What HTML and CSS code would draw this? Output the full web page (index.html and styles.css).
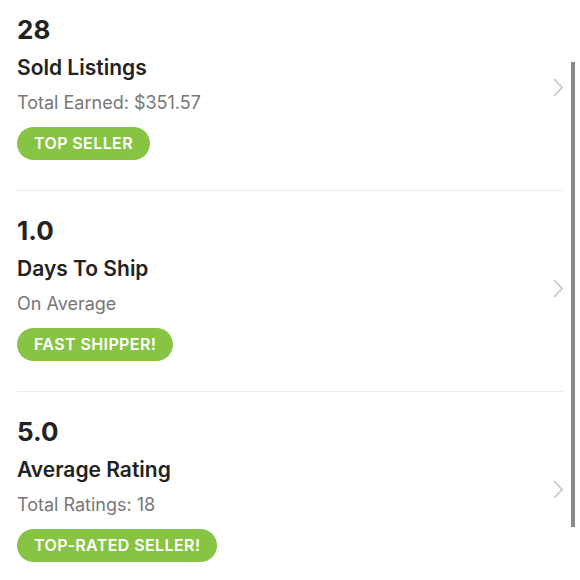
FILE: index.html
```html
<!DOCTYPE html>
<html lang="en">
<head>
  <meta charset="UTF-8">
  <title>Seller Stats</title>
  <link rel="stylesheet" href="styles.css">
</head>
<body>
  <div class="stats">
    <div class="stat-row">
      <div class="info">
        <div class="value">28</div>
        <div class="label">Sold Listings</div>
        <div class="sub">Total Earned: $351.57</div>
        <span class="badge">TOP SELLER</span>
      </div>
      <svg class="chevron" width="10" height="19" viewBox="0 0 10 19"><path d="M1 1l8 8.5-8 8.5" fill="none" stroke="#c9c9c9" stroke-width="1.8"/></svg>
    </div>

    <div class="stat-row">
      <div class="info">
        <div class="value">1.0</div>
        <div class="label">Days To Ship</div>
        <div class="sub">On Average</div>
        <span class="badge">FAST SHIPPER!</span>
      </div>
      <svg class="chevron" width="10" height="19" viewBox="0 0 10 19"><path d="M1 1l8 8.5-8 8.5" fill="none" stroke="#c9c9c9" stroke-width="1.8"/></svg>
    </div>

    <div class="stat-row">
      <div class="info">
        <div class="value">5.0</div>
        <div class="label">Average Rating</div>
        <div class="sub">Total Ratings: 18</div>
        <span class="badge">TOP-RATED SELLER!</span>
      </div>
      <svg class="chevron" width="10" height="19" viewBox="0 0 10 19"><path d="M1 1l8 8.5-8 8.5" fill="none" stroke="#c9c9c9" stroke-width="1.8"/></svg>
    </div>
  </div>
  <div class="scrollbar"></div>
</body>
</html>
```

FILE: styles.css
```css
body {
  margin: 0;
  padding: 0;
  background: #fff;
  font-family: Inter, "Open Sans", sans-serif;
  color: #222;
}
.stats {
  padding: 0 17px;
  margin-top: -10px;
}
.stat-row {
  display: flex;
  align-items: center;
  justify-content: space-between;
  padding: 25px 0 30px;
  border-bottom: 1px solid #ececec;
}
.stat-row:last-child {
  border-bottom: none;
}
.info {
  display: flex;
  flex-direction: column;
  align-items: flex-start;
}
.value {
  font-size: 26px;
  font-weight: 700;
  line-height: 30px;
  color: #222;
}
.label {
  font-size: 21px;
  font-weight: 600;
  line-height: 26px;
  margin-top: 10px;
  color: #222;
}
.sub {
  font-size: 18px;
  line-height: 22px;
  margin-top: 11px;
  color: #777;
}
.badge {
  display: inline-block;
  margin-top: 13px;
  background: #88c443;
  color: #fff;
  font-size: 16px;
  font-weight: 600;
  letter-spacing: 0.4px;
  line-height: 33px;
  padding: 0 17px;
  border-radius: 17px;
}
.chevron {
  margin-right: 0;
}
.scrollbar {
  position: fixed;
  left: 571px;
  top: 62px;
  width: 4px;
  height: 465px;
  background: #8a8a8a;
}
```
